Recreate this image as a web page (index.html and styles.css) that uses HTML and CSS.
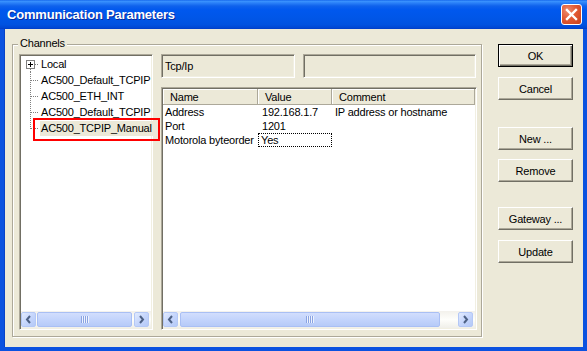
FILE: index.html
```html
<!DOCTYPE html>
<html>
<head>
<meta charset="utf-8">
<link rel="stylesheet" href="styles.css">
</head>
<body>
<div class="window">
  <div class="titlebar">
    <span class="title">Communication Parameters</span>
    <span class="close"><svg width="19" height="19" viewBox="0 0 19 19"><path d="M5 5 L14 14 M14 5 L5 14" stroke="#fff" stroke-width="2.4" stroke-linecap="square" fill="none"/></svg></span>
  </div>
  <div class="body">
    <div class="group">
      <span class="group-label">Channels</span>
      <div class="tree sunken">
        <div class="tree-items">
          <div class="node"><span class="conn root"><span class="plus"></span></span><span class="label">Local</span></div>
          <div class="node"><span class="conn"></span><span class="label">AC500_Default_TCPIP</span></div>
          <div class="node"><span class="conn"></span><span class="label">AC500_ETH_INT</span></div>
          <div class="node"><span class="conn"></span><span class="label">AC500_Default_TCPIP</span></div>
          <div class="node marked"><span class="conn last"></span><span class="label selected">AC500_TCPIP_Manual</span></div>
        </div>
        <div class="hscroll">
          <span class="arrow"><svg width="13" height="13" viewBox="0 0 13 13"><path d="M8 3 L5 6.5 L8 10" stroke="#4D6185" stroke-width="2" fill="none"/></svg></span>
          <span class="thumb tree-thumb"><span class="grip"></span></span>
          <span class="arrow"><svg width="13" height="13" viewBox="0 0 13 13"><path d="M5 3 L8 6.5 L5 10" stroke="#4D6185" stroke-width="2" fill="none"/></svg></span>
        </div>
      </div>
      <div class="right">
        <div class="fields">
          <div class="field sunken first">Tcp/Ip</div>
          <div class="field sunken second"></div>
        </div>
        <div class="table sunken">
          <div class="thead">
            <div class="th c1">Name</div>
            <div class="th c2">Value</div>
            <div class="th c3">Comment</div>
          </div>
          <div class="tbody">
            <div class="tr"><div class="td c1">Address</div><div class="td c2">192.168.1.7</div><div class="td c3">IP address or hostname</div></div>
            <div class="tr"><div class="td c1">Port</div><div class="td c2">1201</div><div class="td c3"></div></div>
            <div class="tr"><div class="td c1">Motorola byteorder</div><div class="td c2 focus">Yes</div><div class="td c3"></div></div>
          </div>
          <div class="hscroll">
            <span class="arrow"><svg width="13" height="13" viewBox="0 0 13 13"><path d="M8 3 L5 6.5 L8 10" stroke="#4D6185" stroke-width="2" fill="none"/></svg></span>
            <span class="thumb table-thumb"><span class="grip"></span></span>
            <span class="track"></span>
            <span class="arrow"><svg width="13" height="13" viewBox="0 0 13 13"><path d="M5 3 L8 6.5 L5 10" stroke="#4D6185" stroke-width="2" fill="none"/></svg></span>
          </div>
        </div>
      </div>
    </div>
    <div class="buttons">
      <div class="btn default">OK</div>
      <div class="btn cancel">Cancel</div>
      <div class="btn new">New ...</div>
      <div class="btn remove">Remove</div>
      <div class="btn gateway">Gateway ...</div>
      <div class="btn update">Update</div>
    </div>
  </div>
</div>
</body>
</html>
```
FILE: styles.css
```css
* { box-sizing: border-box; margin: 0; padding: 0; }
html, body { margin: 0; }
body {
  width: 587px; height: 351px; overflow: hidden;
  font-family: "Liberation Sans", Tahoma, Arial, sans-serif;
  font-size: 11px; color: #000; background: #ECE9D8;
  letter-spacing: -0.2px;
}
.window { width: 587px; height: 351px; display: flex; flex-direction: column; }
.titlebar {
  height: 29px; flex: none; display: flex; align-items: center; justify-content: space-between;
  padding: 0 5px 0 7px;
  background: linear-gradient(to bottom, #0A5AE6 0, #3D95FF 1px, #2A80F8 3px, #0F62EC 6px, #0058EE 10px, #0056E8 60%, #0052E0 85%, #0047D3 96%, #003CC4 100%);
}
.title {
  color: #fff; font-weight: bold; font-size: 13px;
  text-shadow: 1px 1px 0 #0A2A9C; letter-spacing: -0.2px;
}
.close {
  width: 21px; height: 21px; border: 1px solid #fff; border-radius: 3px;
  background: radial-gradient(circle at 30% 30%, #EE8C6E 0, #E25A34 45%, #C8401C 100%);
  display: flex; align-items: center; justify-content: center;
}
.body {
  flex: 1; display: flex; align-items: stretch; background: #ECE9D8;
  border: 4px solid #0B52E0; border-top: 0;
  box-shadow: inset 1px 0 0 #0843C8;
  padding: 15px 10px 10px 8px;
}
.group {
  width: 470px; position: relative; display: flex;
  border: 1px solid #ACA899;
  box-shadow: inset 1px 1px 0 #fff, 1px 1px 0 #fff;
  padding: 9px 4px 6px 6px;
}
.group-label {
  position: absolute; top: -8px; left: 5px; line-height: 13px;
  padding: 0 2px; background: #ECE9D8;
}
.sunken {
  border: 1px solid; border-color: #ACA899 #fff #fff #ACA899;
  box-shadow: inset 1px 1px 0 #716F64, inset -1px -1px 0 #F1EFE2;
  padding: 1px;
}
.tree { width: 134px; display: flex; flex-direction: column; background: #fff; }
.tree-items { flex: 1; }
.node { height: 16px; display: flex; align-items: center; position: relative; }
.conn {
  width: 19px; height: 16px; flex: none;
  background:
    repeating-linear-gradient(to bottom, #808080 0 1px, transparent 1px 2px) 9px 0 / 1px 100% no-repeat,
    repeating-linear-gradient(to right, #808080 0 1px, transparent 1px 2px) 10px 8px / 8px 1px no-repeat;
}
.conn.last {
  background:
    repeating-linear-gradient(to bottom, #808080 0 1px, transparent 1px 2px) 9px 0 / 1px 9px no-repeat,
    repeating-linear-gradient(to right, #808080 0 1px, transparent 1px 2px) 10px 8px / 8px 1px no-repeat;
}
.conn.root {
  display: flex; align-items: center; padding-left: 5px;
  background:
    repeating-linear-gradient(to bottom, #808080 0 1px, transparent 1px 2px) 9px 13px / 1px 3px no-repeat,
    repeating-linear-gradient(to right, #808080 0 1px, transparent 1px 2px) 14px 8px / 4px 1px no-repeat;
}
.plus {
  width: 9px; height: 9px; border: 1px solid #808080; background:
    linear-gradient(#000, #000) 1px 3px / 5px 1px no-repeat,
    linear-gradient(#000, #000) 3px 1px / 1px 5px no-repeat, #fff;
}
.label { padding: 0 1px; line-height: 15px; white-space: nowrap; }
.label.selected { background: #ECE9D8; }
.node.marked::after {
  content: ""; position: absolute; left: 12px; top: -2px; width: 123px; height: 19px;
  border: 2px solid #FF0000;
}
.hscroll {
  height: 17px; flex: none; display: flex; align-items: center;
  background: linear-gradient(to bottom, #F3F1EC, #FEFEFB 50%, #F0EFE9);
}
.arrow {
  width: 15px; height: 15px; flex: none; border-radius: 2px;
  border: 1px solid #B4C8F6;
  background: linear-gradient(135deg, #E2EBFE 0, #C6D6FC 50%, #B4C9F7 100%);
  display: flex; align-items: center; justify-content: center;
}
.tree .hscroll .arrow:last-child { margin-right: 2px; }
.thumb {
  height: 15px; border-radius: 2px; border: 1px solid #A9BFF4;
  background: linear-gradient(to bottom, #D2DEFD 0, #C3D4FC 50%, #B6CAF8 100%);
  display: flex; align-items: center; justify-content: center;
}
.tree-thumb { flex: 1; margin: 0 2px 0 1px; }
.table-thumb { width: 260px; margin-left: 2px; }
.track { flex: 1; }
.table .hscroll .arrow:last-child { margin-right: 2px; }
.grip {
  width: 8px; height: 7px;
  background: repeating-linear-gradient(to right, #8AA3E2 0 1px, #EEF3FE 1px 2px);
}
.right { width: 316px; margin-left: 8px; display: flex; flex-direction: column; }
.fields { height: 24px; display: flex; gap: 8px; flex: none; }
.field { display: flex; align-items: center; padding: 0 2px 0 3px; background: #ECE9D8; }
.field.first { width: 134px; }
.field.second { flex: 1; margin-right: 1px; }
.table { flex: 1; margin-top: 9px; display: flex; flex-direction: column; background: #fff; }
.thead { height: 16px; display: flex; flex: none; }
.th {
  display: flex; align-items: center; padding-left: 7px; background: #ECE9D8;
  border-right: 1px solid #ACA899; border-bottom: 1px solid #ACA899;
  box-shadow: inset 1px 1px 0 #fff;
}
.c1 { width: 95px; flex: none; }
.c2 { width: 74px; flex: none; }
.c3 { flex: 1; }
.tbody { flex: 1; }
.tr { height: 14px; display: flex; }
.td { line-height: 14px; white-space: nowrap; }
.td.c1 { padding-left: 2px; }
.td.c2 { padding-left: 4px; }
.td.c3 { padding-left: 3px; }
.td.focus { outline: 1px dotted #000; outline-offset: -1px; padding-left: 3px; }
.buttons { width: 75px; margin-left: 16px; display: flex; flex-direction: column; }
.btn {
  height: 23px; display: flex; align-items: center; justify-content: center;
  background: #ECE9D8;
  border: 1px solid; border-color: #fff #716F64 #716F64 #fff;
  box-shadow: inset -1px -1px 0 #ACA899;
}
.btn.default {
  border: 1px solid #000;
  box-shadow: inset 1px 1px 0 #fff, inset -1px -1px 0 #716F64, inset -2px -2px 0 #ACA899;
}
.cancel { margin-top: 10px; }
.new { margin-top: 27px; }
.remove { margin-top: 9px; }
.gateway { margin-top: 25px; }
.update { margin-top: 10px; }
```
